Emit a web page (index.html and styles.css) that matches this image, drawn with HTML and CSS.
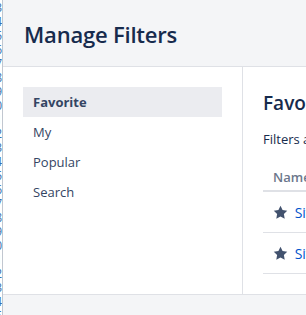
FILE: index.html
```html
<!DOCTYPE html>
<html lang="en">
<head>
    <meta charset="UTF-8">
    <meta name="viewport" content="width=device-width, initial-scale=1.0">
    <title>Manage Filters</title>
    <link rel="stylesheet" href="styles.css">
</head>
<body>
    <div class="page">
        <div class="gutter">3<br>4<br>5<br>6<br>7<br>8<br>9<br>0<br>1<br>2<br>3<br>4<br>5<br>6<br>7<br>8<br>9<br>0<br>1<br>2<br>3<br>4<br>5</div>
        <div class="modal">
            <header class="modal-header">
                <h1>Manage Filters</h1>
            </header>
            <div class="modal-body">
                <nav class="side-nav">
                    <a href="#" class="nav-item active">Favorite</a>
                    <a href="#" class="nav-item">My</a>
                    <a href="#" class="nav-item">Popular</a>
                    <a href="#" class="nav-item">Search</a>
                </nav>
                <div class="panel">
                    <h2>Favorite Filters</h2>
                    <p class="hint">Filters are listed here when you star them.</p>
                    <table class="filters">
                        <thead>
                            <tr><th>Name</th><th>Owner</th></tr>
                        </thead>
                        <tbody>
                            <tr>
                                <td>
                                    <svg class="star" viewBox="0 0 16 16"><path d="M8 .8l2.2 4.6 5 .7-3.6 3.5.9 5L8 12.2l-4.5 2.4.9-5L.8 6.1l5-.7z"/></svg>
                                    <a href="#">Sites in progress</a>
                                </td>
                                <td>admin</td>
                            </tr>
                            <tr>
                                <td>
                                    <svg class="star" viewBox="0 0 16 16"><path d="M8 .8l2.2 4.6 5 .7-3.6 3.5.9 5L8 12.2l-4.5 2.4.9-5L.8 6.1l5-.7z"/></svg>
                                    <a href="#">Site issues</a>
                                </td>
                                <td>admin</td>
                            </tr>
                        </tbody>
                    </table>
                </div>
            </div>
            <footer class="modal-footer"></footer>
        </div>
    </div>
</body>
</html>
```

FILE: styles.css
```css
body {
    margin: 0;
    font-family: "Open Sans", "Noto Sans", sans-serif;
    color: #172b4d;
    background-color: #fff;
}
.page {
    display: flex;
    height: 315px;
    overflow: hidden;
}
.gutter {
    width: 2px;
    flex-shrink: 0;
    overflow: hidden;
    direction: rtl;
    border-right: 1px solid #c1c7d0;
    color: #3572b0;
    font-size: 12px;
    line-height: 14px;
    padding-top: 1px;
}
.modal {
    flex: 1;
    display: flex;
    flex-direction: column;
    min-width: 0;
}
.modal-header {
    background-color: #f4f5f7;
    border-bottom: 1px solid #dfe1e6;
    height: 66px;
    padding: 0 21px;
    display: flex;
    align-items: center;
}
.modal-header h1 {
    margin: 0;
    font-size: 22px;
    font-weight: 600;
    letter-spacing: -0.2px;
    padding-top: 1px;
}
.modal-body {
    flex: 1;
    display: flex;
    min-height: 0;
}
.side-nav {
    width: 199px;
    flex-shrink: 0;
    padding: 20px 20px 0 20px;
    border-right: 1px solid #dfe1e6;
    display: flex;
    flex-direction: column;
}
.nav-item {
    height: 30px;
    line-height: 30px;
    padding: 0 10px;
    font-size: 13px;
    color: #344563;
    text-decoration: none;
}
.nav-item.active {
    background-color: #ebecf0;
    font-weight: bold;
}
.panel {
    flex: 1;
    min-width: 0;
    padding: 20px 0 0 20px;
    overflow: hidden;
}
.panel h2 {
    margin: 4px 0 0;
    font-size: 19px;
    font-weight: 600;
    line-height: 24px;
    white-space: nowrap;
}
.hint {
    margin: 14px 0 0;
    font-size: 13px;
    line-height: 20px;
    white-space: nowrap;
}
.filters {
    margin-top: 16px;
    border-collapse: collapse;
    width: 400px;
    font-size: 14px;
    white-space: nowrap;
}
.filters th {
    text-align: left;
    color: #6b778c;
    font-size: 13px;
    font-weight: 600;
    padding: 3px 10px 4px;
    border-bottom: 2px solid #dfe1e6;
}
.filters td {
    height: 40px;
    padding: 0 10px;
    border-bottom: 1px solid #dfe1e6;
}
.star {
    width: 15px;
    height: 15px;
    fill: #42526e;
    vertical-align: -2px;
    margin-right: 3px;
}
.filters a {
    color: #0052cc;
    text-decoration: none;
}
.modal-footer {
    height: 20px;
    background-color: #f4f5f7;
    border-top: 1px solid #dfe1e6;
}
```
